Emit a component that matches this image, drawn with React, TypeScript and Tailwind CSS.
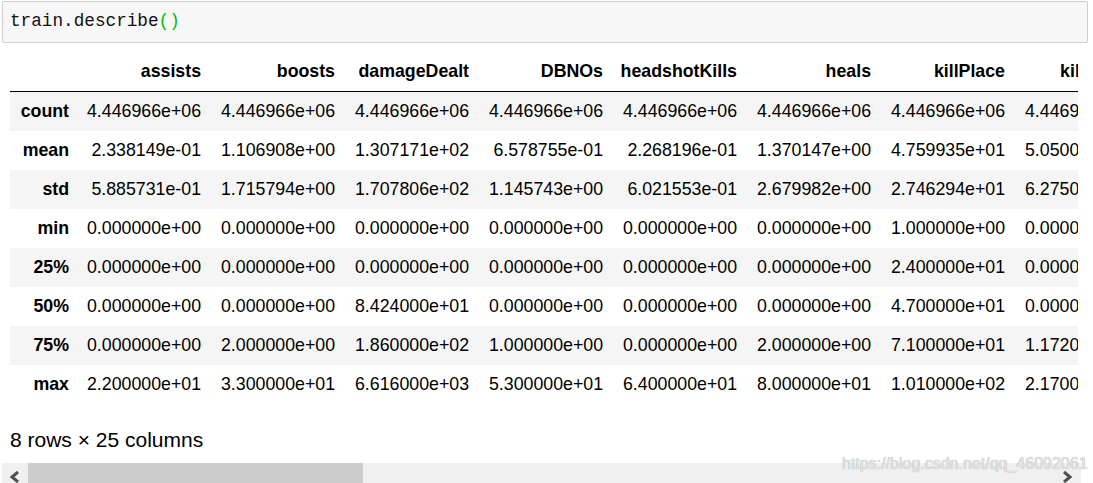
import React from "react";

const cols = ["assists", "boosts", "damageDealt", "DBNOs", "headshotKills", "heals", "killPlace", "killPoints"];
const Z = "0.000000e+00";
const rows: [string, string[]][] = [
  ["count", Array(8).fill("4.446966e+06")],
  ["mean", ["2.338149e-01", "1.106908e+00", "1.307171e+02", "6.578755e-01", "2.268196e-01", "1.370147e+00", "4.759935e+01", "5.050060e+02"]],
  ["std", ["5.885731e-01", "1.715794e+00", "1.707806e+02", "1.145743e+00", "6.021553e-01", "2.679982e+00", "2.746294e+01", "6.275049e+02"]],
  ["min", [Z, Z, Z, Z, Z, Z, "1.000000e+00", Z]],
  ["25%", [Z, Z, Z, Z, Z, Z, "2.400000e+01", Z]],
  ["50%", [Z, Z, "8.424000e+01", Z, Z, Z, "4.700000e+01", Z]],
  ["75%", [Z, "2.000000e+00", "1.860000e+02", "1.000000e+00", Z, "2.000000e+00", "7.100000e+01", "1.172000e+03"]],
  ["max", ["2.200000e+01", "3.300000e+01", "6.616000e+03", "5.300000e+01", "6.400000e+01", "8.000000e+01", "1.010000e+02", "2.170000e+03"]],
];

export default function App() {
  return (
    <div className="relative w-[1093px] h-[483px] overflow-hidden bg-white text-black font-['Liberation_Sans',Arial,sans-serif]">
      {/* code cell */}
      <div className="mt-[1px] ml-[2px] w-[1086px] h-[42px] flex items-center bg-[#f7f7f7] border border-[#cfcfcf] rounded-[2px] pl-[7px]">
        <span className="font-['Liberation_Mono','Courier_New',monospace] text-[17.7px] leading-none text-[#111]">
          train.describe<span className="text-[#0b0]">()</span>
        </span>
      </div>

      {/* table */}
      <div className="ml-[10px] mt-[9px] w-[1068px] overflow-hidden">
        <div className="w-max text-[17.75px]">
          <div className="flex h-[40px] items-center border-b border-black font-bold">
            <div className="w-[67px] shrink-0" />
            {cols.map((c) => (
              <div key={c} className="w-[134px] shrink-0 pr-[10px] text-right whitespace-nowrap">
                {c}
              </div>
            ))}
          </div>
          {rows.map(([label, vals], i) => (
            <div key={label} className={`flex h-[39px] items-center ${i % 2 === 0 ? "bg-[#f5f5f5]" : "bg-white"}`}>
              <div className="w-[67px] shrink-0 pr-[8px] text-right font-bold">{label}</div>
              {vals.map((v, j) => (
                <div key={j} className="w-[134px] shrink-0 pr-[10px] text-right whitespace-nowrap">
                  {v}
                </div>
              ))}
            </div>
          ))}
        </div>
      </div>

      {/* summary */}
      <div className="ml-[10px] mt-[24px] h-[24px] text-[21px] leading-[24px]">8 rows × 25 columns</div>

      {/* scrollbar */}
      <div className="mt-[11px] ml-[2px] w-[1079px] h-[27px] bg-[#f0f0f0] flex items-stretch">
        <div className="w-[26px] shrink-0 flex items-center justify-center">
          <svg width="12" height="14" viewBox="0 0 12 14">
            <polyline points="9,2 3,7 9,12" fill="none" stroke="#505050" strokeWidth="3" />
          </svg>
        </div>
        <div className="w-[335px] shrink-0 bg-[#cdcdcd]" />
        <div className="flex-1" />
        <div className="w-[28px] shrink-0 flex items-center justify-center">
          <svg width="12" height="14" viewBox="0 0 12 14">
            <polyline points="3,2 9,7 3,12" fill="none" stroke="#505050" strokeWidth="3" />
          </svg>
        </div>
      </div>

      {/* watermark */}
      <div className="absolute left-[842px] top-[456px] text-[16px] leading-[16px] text-[#e4e4e4] [text-shadow:0_0_1px_#9a9a9a] whitespace-nowrap">
        https://blog.csdn.net/qq_46092061
      </div>
    </div>
  );
}
